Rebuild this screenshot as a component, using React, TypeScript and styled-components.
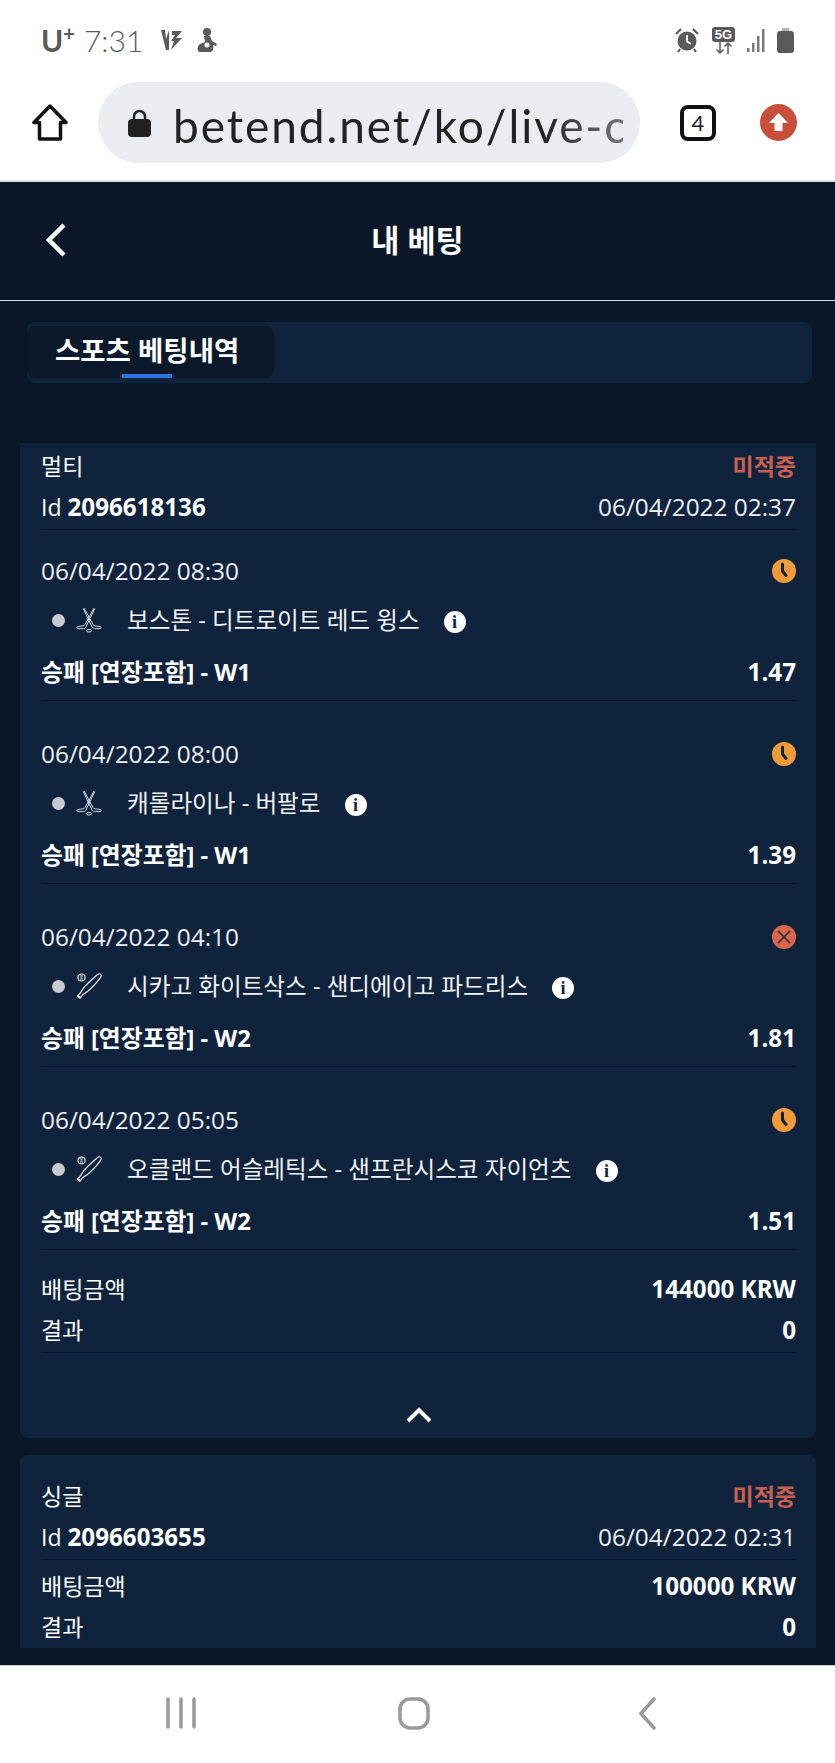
import React from "react";
import styled, { createGlobalStyle } from "styled-components";

const GlobalStyle = createGlobalStyle`
  * {
    box-sizing: border-box;
  }
  html, body {
    margin: 0;
    padding: 0;
    background: #fff;
  }
  body {
    font-family: "Open Sans", "Noto Sans CJK KR", sans-serif;
  }
`;

const Phone = styled.div`
  width: 835px;
  height: 1763px;
  display: flex;
  flex-direction: column;
  overflow: hidden;
`;

/* status bar */
const StatusBar = styled.div`
  height: 83px;
  flex: none;
  padding: 0 41px 3px 41px;
  display: flex;
  align-items: center;
  justify-content: space-between;
  color: #5a5a5a;
`;

const StatusGroup = styled.div`
  display: flex;
  align-items: center;
`;

const Carrier = styled.span`
  font-family: "Lato", sans-serif;
  font-size: 30px;
  font-weight: 700;
  line-height: 1;
  margin-right: 9px;
  sup {
    font-size: 20px;
    line-height: 0;
    vertical-align: 11px;
  }
`;

const Clock = styled.span`
  font-family: "Lato", sans-serif;
  font-size: 30px;
  font-weight: 300;
  line-height: 1;
  margin-right: 17px;
`;

const FiveG = styled.div`
  width: 23px;
  height: 27px;
  margin: 0 11px 0 13px;
  display: flex;
  flex-direction: column;
  align-items: center;
  svg {
    display: block;
  }
`;

const FiveGLabel = styled.span`
  width: 23px;
  height: 15px;
  background: #5a5a5a;
  border-radius: 3px;
  color: #fff;
  font-family: "Liberation Sans", sans-serif;
  font-size: 13px;
  font-weight: 700;
  line-height: 15px;
  text-align: center;
`;

/* browser bar */
const BrowserBar = styled.div`
  height: 99px;
  flex: none;
  padding: 0 38px 18px 32px;
  display: flex;
  align-items: center;
  background: #fff;
  border-bottom: 2px solid #dfe2e6;
`;

const UrlPill = styled.div`
  width: 542px;
  height: 81px;
  margin-left: 30px;
  margin-right: 40px;
  padding: 0 17px 0 30px;
  border-radius: 41px;
  background: #ebecf0;
  display: flex;
  align-items: center;
`;

const UrlText = styled.div`
  flex: 1;
  margin: 6px 0 0 22px;
  overflow: hidden;
  white-space: nowrap;
  color: #222;
  font-family: "Lato", sans-serif;
  font-size: 46px;
  letter-spacing: 1.9px;
  line-height: 60px;
  -webkit-mask-image: linear-gradient(to right, #000 82%, rgba(0, 0, 0, 0.6) 100%);
  mask-image: linear-gradient(to right, #000 82%, rgba(0, 0, 0, 0.6) 100%);
`;

const TabCount = styled.div`
  width: 36px;
  height: 36px;
  margin-right: 44px;
  border: 4px solid #111;
  border-radius: 8px;
  color: #222;
  font-family: "Lato", sans-serif;
  font-size: 22px;
  line-height: 27px;
  text-align: center;
`;

const UpdateBadge = styled.div`
  width: 37px;
  height: 37px;
  border-radius: 50%;
  background: #c8503a;
  display: flex;
  align-items: center;
  justify-content: center;
`;

/* betting page */
const Screen = styled.div`
  height: 1483px;
  flex: none;
  background: #0a1728;
  color: #fff;
  display: flex;
  flex-direction: column;
`;

const Header = styled.div`
  height: 119px;
  flex: none;
  padding: 0 0 3px 46px;
  position: relative;
  display: flex;
  align-items: center;
  border-bottom: 1px solid #d5d8dc;
`;

const Title = styled.h1`
  position: absolute;
  left: 0;
  right: 0;
  margin: 0;
  text-align: center;
  font-size: 30.6px;
  font-weight: 700;
  line-height: 40px;
`;

const TabBar = styled.div`
  height: 61px;
  flex: none;
  margin: 21px 23px 60px 27px;
  padding: 4px 0 5px;
  border-radius: 8px;
  background: #10233d;
`;

const ActiveTab = styled.div`
  width: 247px;
  height: 52px;
  position: relative;
  padding-left: 28px;
  border-radius: 8px;
  background: #0b192b;
  font-size: 27.5px;
  font-weight: 700;
  line-height: 50px;
  &::after {
    content: "";
    position: absolute;
    left: 95px;
    bottom: 0;
    width: 50px;
    height: 4px;
    background: #2f74dd;
  }
`;

const CardList = styled.div`
  padding: 0 19px 17px 20px;
  display: flex;
  flex-direction: column;
  gap: 17px;
`;

const Card = styled.section<{ $clipped?: boolean }>`
  background: #10233d;
  padding: ${(p) => (p.$clipped ? "20px 20px 0 21px" : "2px 20px 0 21px")};
  border-radius: ${(p) => (p.$clipped ? "8px 8px 0 0" : "0 0 8px 8px")};
  height: ${(p) => (p.$clipped ? "193px" : "995px")};
  overflow: hidden;
`;

const Row = styled.div<{ $h?: number }>`
  height: ${(p) => p.$h ?? 41}px;
  display: flex;
  align-items: center;
  justify-content: space-between;
  font-size: 23px;
  line-height: 32px;
  white-space: nowrap;
`;

const Strong = styled.b`
  font-weight: 700;
  font-size: 24.2px;
`;

const Pick = styled.b`
  font-weight: 700;
  font-size: 23.8px;
`;

const Loss = styled.span`
  color: #c9604d;
  font-size: 23px;
  font-weight: 700;
`;

const Stamp = styled.span`
  font-size: 24.4px;
  color: #eef0f3;
`;

const Divider = styled.div`
  height: 1px;
  margin-top: 2px;
  background: #0a1728;
`;

const Selection = styled.div`
  padding: 21px 0 8px;
  margin-bottom: 12px;
  border-bottom: 1px solid #0a1728;
`;

const TeamsRow = styled.div`
  height: 40px;
  margin: 8px 0 13px;
  padding-left: 11px;
  display: flex;
  align-items: center;
  font-size: 23.6px;
  white-space: nowrap;
  color: #f2f3f5;
`;

const Dot = styled.span`
  width: 13px;
  height: 13px;
  flex: none;
  border-radius: 50%;
  background: #c9cacd;
  margin: 2px 11px 0 0;
`;

const SportSlot = styled.span`
  width: 26px;
  height: 26px;
  flex: none;
  margin: 2px 25px 0 0;
  svg {
    display: block;
  }
`;

const InfoDot = styled.span`
  width: 22px;
  height: 22px;
  flex: none;
  margin: 6px 0 0 24px;
  border-radius: 50%;
  background: #fff;
  color: #10233d;
  font-family: "Liberation Serif", serif;
  font-size: 18px;
  font-weight: 700;
  line-height: 22px;
  text-align: center;
`;

const Totals = styled.div<{ $top: number }>`
  padding-top: ${(p) => p.$top}px;
`;

const Collapse = styled.div`
  padding-top: 54px;
  display: flex;
  justify-content: center;
`;

/* android nav */
const NavBar = styled.div`
  flex: 1;
  padding-left: 166px;
  background: #fff;
  border-top: 1px solid #c9d3d8;
  display: flex;
  align-items: flex-start;
  gap: 202px;
  svg {
    display: block;
    margin-top: 31px;
  }
  svg:last-child {
    margin-left: 6px;
  }
`;

type Sport = "hockey" | "baseball";
type Outcome = "pending" | "lost";

const bets: {
  date: string;
  teams: string;
  sport: Sport;
  outcome: Outcome;
  pick: string;
  odds: string;
}[] = [
  { date: "06/04/2022 08:30", teams: "보스톤 - 디트로이트 레드 윙스", sport: "hockey", outcome: "pending", pick: "W1", odds: "1.47" },
  { date: "06/04/2022 08:00", teams: "캐롤라이나 - 버팔로", sport: "hockey", outcome: "pending", pick: "W1", odds: "1.39" },
  { date: "06/04/2022 04:10", teams: "시카고 화이트삭스 - 샌디에이고 파드리스", sport: "baseball", outcome: "lost", pick: "W2", odds: "1.81" },
  { date: "06/04/2022 05:05", teams: "오클랜드 어슬레틱스 - 샌프란시스코 자이언츠", sport: "baseball", outcome: "pending", pick: "W2", odds: "1.51" },
];

const SportIcon = ({ sport }: { sport: Sport }) =>
  sport === "hockey" ? (
    <svg width="26" height="26" viewBox="0 0 26 26" fill="none" stroke="#d5d9de" strokeWidth="1">
      <path d="M18 1 9 17.500c-.5.900-1.200 1.300-2.200 1.400l-4.800.6c-1.300.2-1.500 2-.2 2.100h5.500c1.300 0 2-.5 2.600-1.500L18.800 1.500" />
      <path d="M8 1l9 16.500c.5.900 1.200 1.300 2.200 1.400l4.800.6c1.300.2 1.500 2 .2 2.100h-5.500c-1.300 0-2-.5-2.600-1.500L7.200 1.500" />
      <ellipse cx="13" cy="23.700" rx="2.600" ry="1.300" />
    </svg>
  ) : (
    <svg width="26" height="26" viewBox="0 0 26 26" fill="none" stroke="#e6e8eb" strokeWidth="1.200">
      <path d="M24 1c1.200.6 1.500 1.600 1 2.600-3 5-8 10-13.500 14.900l-5 3.300-2.500 3.200-2.500-2.300 2.800-2.700 3.200-5C11 11 17 5.500 21 2c1-.9 2-1.500 3-1Z" />
      <path d="M1.500 22.500 4 25" strokeWidth="1.800" />
      <circle cx="5.500" cy="4.500" r="3.500" />
      <path d="M4.500 1.500c.8 2 .8 4 0 6M6.500 1.500c-.8 2-.8 4 0 6" strokeWidth=".8" />
    </svg>
  );

const OutcomeIcon = ({ outcome }: { outcome: Outcome }) =>
  outcome === "pending" ? (
    <svg width="24" height="24" viewBox="0 0 24 24">
      <circle cx="12" cy="12" r="12" fill="#f09a38" />
      <path d="M10.500 5v7l3.500 4.500" fill="none" stroke="#10233d" strokeWidth="3" strokeLinecap="round" strokeLinejoin="round" />
    </svg>
  ) : (
    <svg width="24" height="24" viewBox="0 0 24 24">
      <circle cx="12" cy="12" r="12" fill="#d9654b" />
      <path d="M6 6l12 12M18 6 6 18" stroke="#26233a" strokeWidth="1.500" />
    </svg>
  );

const App = () => {
  return (
    <Phone>
      <GlobalStyle />
      <StatusBar>
        <StatusGroup>
          <Carrier>
            U<sup>+</sup>
          </Carrier>
          <Clock>7:31</Clock>
          <svg width="24" height="24" viewBox="0 0 24 24" fill="#5a5a5a" style={{ marginRight: 12 }}>
            <path d="M1 2h4l1 9 3-9 0 20H6L1 2Z" />
            <path d="M12 3h10l-6 7h6L11 22l3-9h-3l4-6h-3V3Z" />
          </svg>
          <svg width="22" height="26" viewBox="0 0 22 26" fill="#5a5a5a">
            <circle cx="11" cy="5" r="4" />
            <path d="M8 9h6l2 5 5 3-1 2-3-1c1 3 0 6-2 7H3c-2-2-2-5 1-8l5-2-1-6Z" />
            <circle cx="11" cy="18" r="2.500" fill="#fff" />
          </svg>
        </StatusGroup>
        <StatusGroup>
          <svg width="24" height="25" viewBox="0 0 24 25" fill="#5a5a5a">
            <circle cx="12" cy="13" r="9.500" />
            <path d="M12 7v6.500l4 2.500" fill="none" stroke="#fff" strokeWidth="2" />
            <path d="M1 6 6 1M23 6l-5-5M5 21l-2 3M19 21l2 3" stroke="#5a5a5a" strokeWidth="2.200" />
          </svg>
          <FiveG>
            <FiveGLabel>5G</FiveGLabel>
            <svg width="20" height="12" viewBox="0 0 20 12" fill="none" stroke="#5a5a5a" strokeWidth="1.500">
              <path d="M6 0v11M2.500 7.500 6 11l3.500-3.500M14 12V1M10.500 4.500 14 1l3.500 3.500" />
            </svg>
          </FiveG>
          <svg width="20" height="25" viewBox="0 0 20 25" fill="#5a5a5a" style={{ marginRight: 11 }}>
            <rect x="1" y="20" width="2.500" height="4" opacity=".8" />
            <rect x="6" y="15" width="2.500" height="9" opacity=".8" />
            <rect x="11" y="8" width="2.500" height="16" opacity=".8" />
            <rect x="16" y="1" width="2.500" height="23" opacity=".8" />
          </svg>
          <svg width="17" height="25" viewBox="0 0 17 25">
            <rect x="5" y="0" width="7" height="4" fill="#b5b5b5" />
            <rect x="0" y="3" width="17" height="22" rx="3" fill="#5a5a5a" />
          </svg>
        </StatusGroup>
      </StatusBar>

      <BrowserBar>
        <svg width="36" height="37" viewBox="0 0 36 37" fill="none" stroke="#111" strokeWidth="3.500" strokeLinejoin="round">
          <path d="M18 2 2 18.500h5.500V35h21V18.500H34L18 2Z" />
        </svg>
        <UrlPill>
          <svg width="23" height="28" viewBox="0 0 23 28">
            <path d="M6 12V7.500a5.500 5.500 0 0 1 11 0V12" fill="none" stroke="#222" strokeWidth="2.500" />
            <rect x="0" y="10" width="23" height="18" rx="4" fill="#222" />
          </svg>
          <UrlText>betend.net/ko/live-c</UrlText>
        </UrlPill>
        <TabCount>4</TabCount>
        <UpdateBadge>
          <svg width="21" height="21" viewBox="0 0 21 21" fill="#fff">
            <path d="M10.500 1 20 11h-5.500v8h-8v-8H1l9.500-10Z" />
          </svg>
        </UpdateBadge>
      </BrowserBar>

      <Screen>
        <Header>
          <svg width="20" height="34" viewBox="0 0 20 34" fill="none" stroke="#fff" strokeWidth="4.500">
            <path d="M18 2 3 17l15 15" />
          </svg>
          <Title>내 베팅</Title>
        </Header>

        <TabBar>
          <ActiveTab>스포츠 베팅내역</ActiveTab>
        </TabBar>

        <CardList>
          <Card>
            <Row>
              <span>멀티</span>
              <Loss>미적중</Loss>
            </Row>
            <Row>
              <span>
                Id <Strong>2096618136</Strong>
              </span>
              <Stamp>06/04/2022 02:37</Stamp>
            </Row>
            <Divider />
            {bets.map((bet) => (
              <Selection key={bet.date}>
                <Row $h={40}>
                  <Stamp>{bet.date}</Stamp>
                  <OutcomeIcon outcome={bet.outcome} />
                </Row>
                <TeamsRow>
                  <Dot />
                  <SportSlot>
                    <SportIcon sport={bet.sport} />
                  </SportSlot>
                  {bet.teams}
                  <InfoDot>i</InfoDot>
                </TeamsRow>
                <Row $h={40}>
                  <Pick>승패 [연장포함] - {bet.pick}</Pick>
                  <Strong>{bet.odds}</Strong>
                </Row>
              </Selection>
            ))}
            <Totals $top={6}>
              <Row>
                <span>배팅금액</span>
                <Strong>144000 KRW</Strong>
              </Row>
              <Row>
                <span>결과</span>
                <Strong>0</Strong>
              </Row>
            </Totals>
            <Divider />
            <Collapse>
              <svg width="26" height="16" viewBox="0 0 26 16" fill="none" stroke="#fff" strokeWidth="4">
                <path d="M2 14 13 3l11 11" />
              </svg>
            </Collapse>
          </Card>

          <Card $clipped>
            <Row>
              <span>싱글</span>
              <Loss>미적중</Loss>
            </Row>
            <Row>
              <span>
                Id <Strong>2096603655</Strong>
              </span>
              <Stamp>06/04/2022 02:31</Stamp>
            </Row>
            <Divider />
            <Totals $top={5}>
              <Row>
                <span>배팅금액</span>
                <Strong>100000 KRW</Strong>
              </Row>
              <Row>
                <span>결과</span>
                <Strong>0</Strong>
              </Row>
            </Totals>
          </Card>
        </CardList>
      </Screen>

      <NavBar>
        <svg width="30" height="32" viewBox="0 0 30 32" stroke="#9a9a9a" strokeWidth="3.500" strokeLinecap="round">
          <path d="M2 2v28M15 2v28M28 2v28" />
        </svg>
        <svg width="32" height="33" viewBox="0 0 32 33" fill="none" stroke="#9a9a9a" strokeWidth="3.500">
          <rect x="2" y="2" width="28" height="29" rx="10" />
        </svg>
        <svg width="19" height="33" viewBox="0 0 19 33" fill="none" stroke="#9a9a9a" strokeWidth="3.500" strokeLinecap="round">
          <path d="M16 2 3 16.500 16 31" />
        </svg>
      </NavBar>
    </Phone>
  );
};

export default App;
